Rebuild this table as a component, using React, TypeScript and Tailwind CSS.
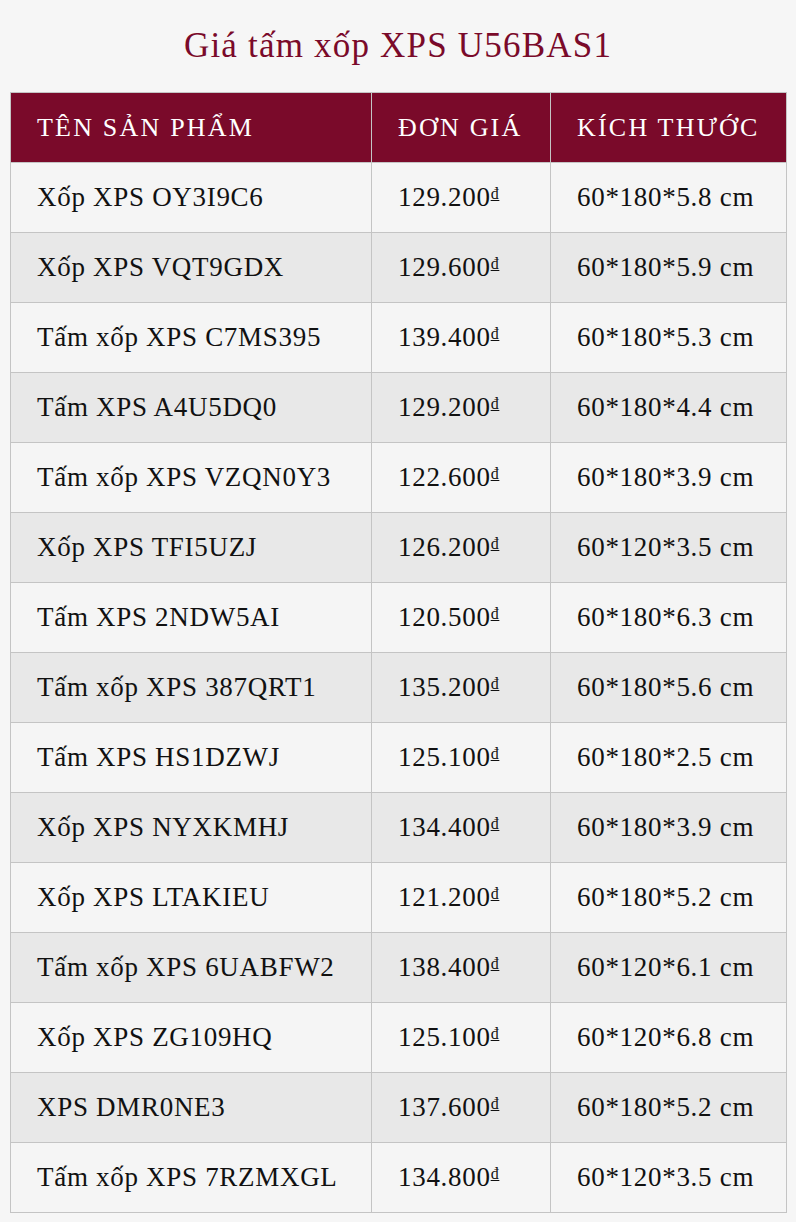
import React from "react";

const rows: [string, string, string][] = [
  ["Xốp XPS OY3I9C6", "129.200", "60*180*5.8 cm"],
  ["Xốp XPS VQT9GDX", "129.600", "60*180*5.9 cm"],
  ["Tấm xốp XPS C7MS395", "139.400", "60*180*5.3 cm"],
  ["Tấm XPS A4U5DQ0", "129.200", "60*180*4.4 cm"],
  ["Tấm xốp XPS VZQN0Y3", "122.600", "60*180*3.9 cm"],
  ["Xốp XPS TFI5UZJ", "126.200", "60*120*3.5 cm"],
  ["Tấm XPS 2NDW5AI", "120.500", "60*180*6.3 cm"],
  ["Tấm xốp XPS 387QRT1", "135.200", "60*180*5.6 cm"],
  ["Tấm XPS HS1DZWJ", "125.100", "60*180*2.5 cm"],
  ["Xốp XPS NYXKMHJ", "134.400", "60*180*3.9 cm"],
  ["Xốp XPS LTAKIEU", "121.200", "60*180*5.2 cm"],
  ["Tấm xốp XPS 6UABFW2", "138.400", "60*120*6.1 cm"],
  ["Xốp XPS ZG109HQ", "125.100", "60*120*6.8 cm"],
  ["XPS DMR0NE3", "137.600", "60*180*5.2 cm"],
  ["Tấm xốp XPS 7RZMXGL", "134.800", "60*120*3.5 cm"],
];

export default function App() {
  return (
    <div
      className="w-[796px] h-[1222px] bg-[#f6f6f6] px-[10px] pt-[20px] text-[#111]"
      style={{ fontFamily: '"Liberation Serif", "DejaVu Serif", serif' }}
    >
      <h1 className="text-center text-[35px] tracking-[1.2px] leading-[52px] text-[#7a0a2a] h-[72px]">
        Giá tấm xốp XPS U56BAS1
      </h1>
      <table className="w-[776px] border-collapse table-fixed">
        <colgroup>
          <col className="w-[361px]" />
          <col className="w-[179px]" />
          <col className="w-[236px]" />
        </colgroup>
        <thead>
          <tr className="h-[70px] bg-[#7a0a2a] text-white text-[26px] tracking-[2.2px] text-left">
            <th className="font-normal pl-[26px] border border-[#c4c4c4]">TÊN SẢN PHẨM</th>
            <th className="font-normal pl-[26px] border border-[#c4c4c4]">ĐƠN GIÁ</th>
            <th className="font-normal pl-[26px] border border-[#c4c4c4]">KÍCH THƯỚC</th>
          </tr>
        </thead>
        <tbody>
          {rows.map((r, i) => (
            <tr
              key={i}
              className={`h-[70px] text-[27px] tracking-[0.7px] ${i % 2 === 1 ? "bg-[#e8e8e8]" : "bg-[#f5f5f5]"}`}
            >
              <td className="pl-[26px] border border-[#c4c4c4]">{r[0]}</td>
              <td className="pl-[26px] border border-[#c4c4c4]">
                {r[1]}
                <span className="text-[16px] underline align-[7px]">đ</span>
              </td>
              <td className="pl-[26px] border border-[#c4c4c4]">{r[2]}</td>
            </tr>
          ))}
        </tbody>
      </table>
    </div>
  );
}
